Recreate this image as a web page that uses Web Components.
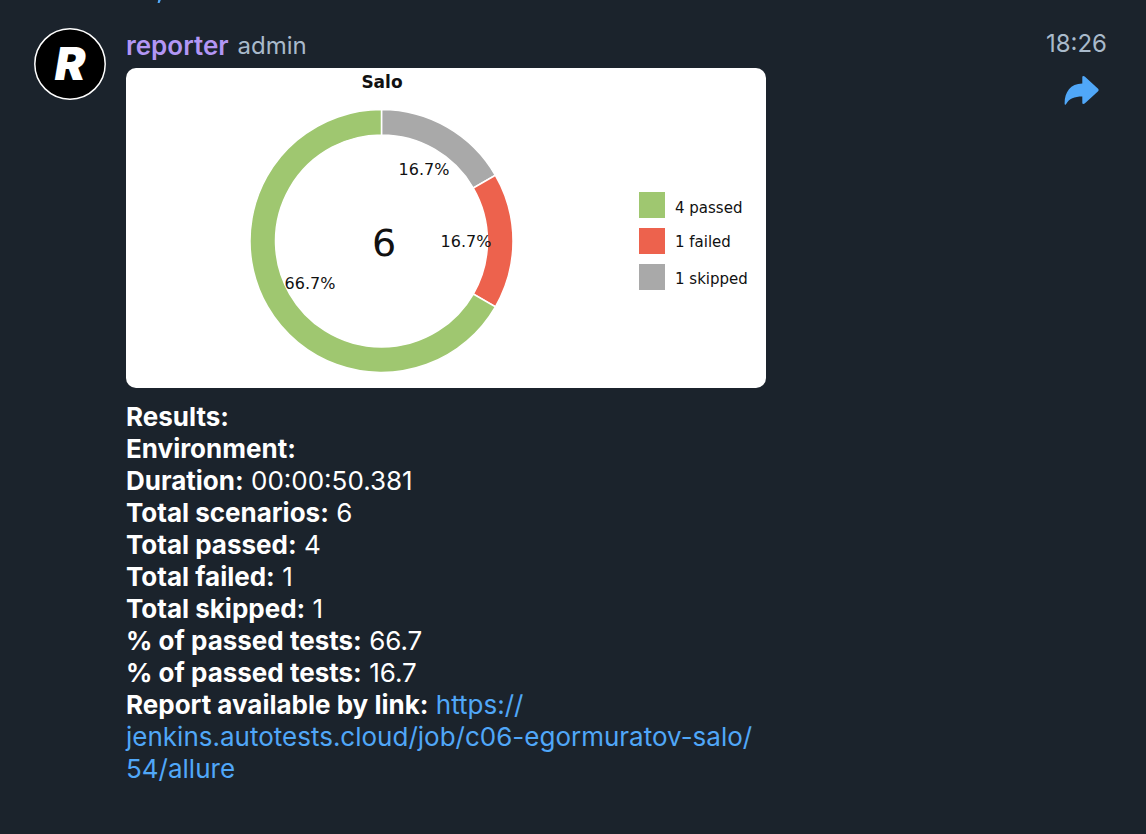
<!DOCTYPE html>
<html lang="en">
<head>
<meta charset="utf-8">
<meta name="viewport" content="width=device-width, initial-scale=1">
<title>reporter</title>
<style>
  html { background: #1b232c; }
  body {
    margin: 0;
    background: #1b232c;
    color: #fff;
    font: 400 26px/32px Inter, "Liberation Sans", sans-serif;
  }
</style>
</head>
<body>
<chat-feed>
  <previous-message slot="previous"></previous-message>
  <chat-message author="reporter" role-name="admin" time="18:26" initial="R">
    <donut-chart slot="media"></donut-chart>
    <report-line label="Results:"></report-line>
    <report-line label="Environment:"></report-line>
    <report-line label="Duration:">00:00:50.381</report-line>
    <report-line label="Total scenarios:">6</report-line>
    <report-line label="Total passed:">4</report-line>
    <report-line label="Total failed:">1</report-line>
    <report-line label="Total skipped:">1</report-line>
    <report-line label="% of passed tests:">66.7</report-line>
    <report-line label="% of passed tests:">16.7</report-line>
    <report-line label="Report available by link:"><report-link href="https://jenkins.autotests.cloud/job/c06-egormuratov-salo/54/allure">https://<wbr>jenkins.autotests.cloud/job/c06-egormuratov-salo/<wbr>54/allure</report-link></report-line>
  </chat-message>
</chat-feed>

<script>
class ShadowElement extends HTMLElement {
  constructor() {
    super();
    this.attachShadow({ mode: 'open' });
  }
  connectedCallback() {
    this.shadowRoot.innerHTML = this.render();
  }
}

customElements.define('chat-feed', class extends ShadowElement {
  render() {
    return `<style>
      :host { display: flex; flex-direction: column; overflow: hidden; }
    </style>
    <slot name="previous"></slot><slot></slot>`;
  }
});

/* Tail of the message above, scrolled out of view except for one tip. */
customElements.define('previous-message', class extends ShadowElement {
  render() {
    return `<style>
      :host { display: block; height: 28px; padding-left: 157px; }
      svg { display: block; width: 4px; height: 3px; }
    </style>
    <svg viewBox="0 0 4 3" aria-hidden="true"><path d="M1.200 0H3.800L2.600 3H0.600Z" fill="#50a7f8"/></svg>`;
  }
});

customElements.define('user-avatar', class extends ShadowElement {
  render() {
    return `<style>
      :host { display: block; width: 72px; height: 72px; }
      svg { display: block; width: 100%; height: 100%; }
      text { font: italic 900 46px Inter, "Liberation Sans", sans-serif; fill: #fff; }
    </style>
    <svg viewBox="0 0 72 72" aria-hidden="true">
      <circle cx="36" cy="36" r="35.2" fill="#000" stroke="#fff" stroke-width="1.5"/>
      <text x="36" y="52" text-anchor="middle">${this.getAttribute('initial')}</text>
    </svg>`;
  }
});

customElements.define('share-button', class extends ShadowElement {
  render() {
    return `<style>
      :host { display: block; }
      button { display: block; padding: 0; border: 0; background: none; color: #50a7f8; cursor: pointer; }
      svg { display: block; width: 36px; height: 30px; }
    </style>
    <button type="button" aria-label="Forward">
      <svg viewBox="0 0 36 30" fill="currentColor">
        <path d="M18.3 8.4V2.1Q18.3 1 19.3 1Q20.2 1 21 1.8L34.1 13.8Q35.4 15 34.1 16.2L21 28.2Q20.2 29 19.3 29Q18.3 29 18.3 27.9V21.4C10.500 21.400 4.900 23.300 2.200 29Q1.800 29.900 1.300 29.700Q0.600 29.600 0.600 28.400C0.600 17 6.500 8.400 18.300 8.400Z"/>
      </svg>
    </button>`;
  }
});

customElements.define('chat-message', class extends ShadowElement {
  render() {
    const a = n => this.getAttribute(n);
    return `<style>
      :host {
        display: grid;
        grid-template-columns: 72px minmax(0, 640px) minmax(64px, 1fr);
        column-gap: 20px;
        padding: 0 39px 48px 34px;
      }
      header { display: flex; gap: 9px; height: 40px; line-height: 36px; }
      .name { margin: 0; font: inherit; font-weight: 600; color: #b296f5; }
      .role { color: #a9bacb; font-size: 24px; }
      aside { display: flex; flex-direction: column; align-items: flex-end; }
      time { color: #a9bacb; font-size: 24px; line-height: 32px; }
      share-button { margin: 15px 7px 0 0; }
      .text { margin-top: 13px; }
    </style>
    <user-avatar initial="${a('initial')}"></user-avatar>
    <article>
      <header><h2 class="name">${a('author')}</h2><span class="role">${a('role-name')}</span></header>
      <slot name="media"></slot>
      <div class="text"><slot></slot></div>
    </article>
    <aside><time>${a('time')}</time><share-button></share-button></aside>`;
  }
});

customElements.define('report-line', class extends ShadowElement {
  render() {
    return `<style>
      :host { display: block; }
      b { font-weight: 700; }
    </style>
    <b>${this.getAttribute('label')}</b> <slot></slot>`;
  }
});

customElements.define('report-link', class extends ShadowElement {
  render() {
    return `<style>
      :host { display: inline; }
      a { color: #50a7f8; text-decoration: none; }
    </style>
    <a href="${this.getAttribute('href')}"><slot></slot></a>`;
  }
});

customElements.define('donut-chart', class extends ShadowElement {
  render() {
    const cx = 255.5, cy = 173, R = 131.5, r = 106;
    const pt = (rad, deg) => {
      const t = deg * Math.PI / 180;
      return `${(cx + rad * Math.sin(t)).toFixed(2)} ${(cy - rad * Math.cos(t)).toFixed(2)}`;
    };
    const arc = (from, to, fill) => {
      const big = to - from > 180 ? 1 : 0;
      return `<path fill="${fill}" d="M${pt(R, from)}A${R} ${R} 0 ${big} 1 ${pt(R, to)}L${pt(r, to)}A${r} ${r} 0 ${big} 0 ${pt(r, from)}Z"/>`;
    };
    return `<style>
      :host { display: block; }
      svg { display: block; width: 100%; height: auto; border-radius: 10px; background: #fff; }
      text { font-family: "DejaVu Sans", sans-serif; fill: #111; }
      .title { font-size: 17px; font-weight: 700; }
      .total { font-size: 38px; }
      .share { font-size: 16px; }
      .key { font-size: 15px; }
    </style>
    <svg viewBox="0 0 640 320" role="img" aria-label="Salo: 4 passed, 1 failed, 1 skipped">
      <g stroke="#fff" stroke-width="1.5">
        ${arc(0, 60, '#a9a9a9')}${arc(60, 120, '#ed624d')}${arc(120, 360, '#9fc770')}
      </g>
      <text class="title" x="256" y="20" text-anchor="middle">Salo</text>
      <text class="total" x="258" y="188" text-anchor="middle">6</text>
      <text class="share" x="298" y="107" text-anchor="middle">16.7%</text>
      <text class="share" x="340" y="179" text-anchor="middle">16.7%</text>
      <text class="share" x="184" y="221" text-anchor="middle">66.7%</text>
      <rect x="513" y="124" width="26" height="26" fill="#9fc770"/>
      <rect x="513" y="160" width="26" height="26" fill="#ed624d"/>
      <rect x="513" y="196" width="26" height="26" fill="#a9a9a9"/>
      <text class="key" x="549" y="145">4 passed</text>
      <text class="key" x="549" y="179">1 failed</text>
      <text class="key" x="549" y="216">1 skipped</text>
    </svg>`;
  }
});
</script>
</body>
</html>
